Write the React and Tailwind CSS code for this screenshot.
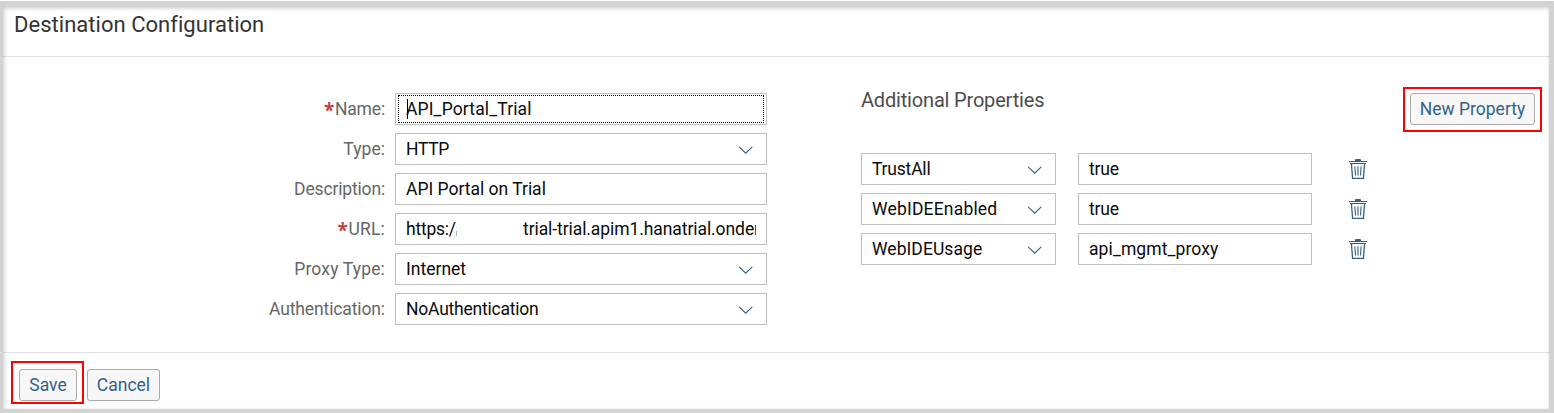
import React from "react";

function Chevron() {
  return (
    <svg width="16" height="9" viewBox="0 0 16 9" className="mt-[2px] shrink-0" fill="none" stroke="#346187" strokeWidth="1.15">
      <path d="M1.1 0.9 L7.7 7.2 L14.3 0.9" />
    </svg>
  );
}

function Trash() {
  return (
    <svg width="18" height="20" viewBox="0 0 18 20" fill="none" stroke="#346187">
      <path d="M6 1 Q6 0 7 0 H11 Q12 0 12 1 V2 H6 Z" fill="#346187" stroke="none" />
      <path d="M0 2.5 H18 M1 4.5 H17" strokeWidth="1" />
      <path d="M2.4 4.5 L3.6 19.4 H14.4 L15.6 4.5" strokeWidth="1.3" />
      <path d="M5.9 7.5 L6.5 16.5 M9 7.5 V16.5 M12.1 7.5 L11.5 16.5" strokeWidth="1.1" />
    </svg>
  );
}

function Box({ width, value, spacing = "tracking-[-0.2px]", select, focused, children }) {
  return (
    <div className={`relative flex h-8 shrink-0 items-center justify-between border border-[#bfbfbf] bg-white pl-[10px] text-[#0a0a0a] ${select ? "pr-[12px]" : "pr-[10px]"} ${width}`}>
      {focused && <div className="absolute inset-x-[2px] inset-y-[1px] border border-dotted border-black" />}
      {focused && <div className="absolute left-[11px] top-[5px] h-[20px] w-px bg-black" />}
      {children || <span className={`whitespace-nowrap ${spacing}`}>{value}</span>}
      {select && <Chevron />}
    </div>
  );
}

function Field({ label, labelSpacing = "tracking-[-0.15px]", required, ...box }) {
  return (
    <div className="flex items-center">
      <div className="flex w-[385px] justify-end text-[#666666]">
        {required && (
          <span className="w-[11px] font-['Open_Sans',sans-serif] text-[19px] leading-[20px] font-bold text-[#c14646]">
            <span className="relative top-[1px]">*</span>
          </span>
        )}
        <span className={labelSpacing}>{label}</span>
      </div>
      <div className="w-[10px]" />
      <Box width="w-[372px]" {...box} />
    </div>
  );
}

function Property({ name, nameSpacing, value, valueSpacing }) {
  return (
    <div className="flex items-center">
      <Box width="w-[195px]" value={name} spacing={nameSpacing} select />
      <div className="w-[22px]" />
      <Box width="w-[234px]" value={value} spacing={valueSpacing} />
      <div className="w-[37px]" />
      <Trash />
    </div>
  );
}

function Button({ children, className }) {
  return (
    <button className={`h-8 rounded-[3px] border border-[#ababab] bg-[#f7f7f7] text-center whitespace-nowrap text-[#346187] ${className}`}>
      {children}
    </button>
  );
}

export default function App() {
  return (
    <div className="h-[413px] w-[1554px] overflow-hidden bg-white pt-px font-['Roboto',sans-serif] text-[17.5px] leading-[20px]">
      <div className="relative flex h-[412px] flex-col border-t-[5px] border-r-[5px] border-b-4 border-l-[3px] border-[#d3d3d3]">
        <div className="pointer-events-none absolute inset-0 shadow-[inset_1px_2px_4px_rgba(0,0,0,0.22)]" />
        <header className="flex h-[51px] items-start border-b border-[#e2e2e2] pt-[6px] pl-[11px]">
          <h1 className="text-[22px] leading-[26px] tracking-[0.03px] text-[#333333]">Destination Configuration</h1>
        </header>
        <main className="-ml-[3px] flex h-[296px] border-b border-[#e2e2e2] pt-[36px]">
          <div className="flex w-[861px] shrink-0 flex-col gap-2">
            <Field required label="Name:" value="API_Portal_Trial" spacing="tracking-[0.13px]" focused />
            <Field label="Type:" labelSpacing="tracking-[0.05px]" value="HTTP" spacing="tracking-[-0.3px]" select />
            <Field label="Description:" labelSpacing="tracking-[-0.16px]" value="API Portal on Trial" spacing="tracking-[-0.01px]" />
            <Field required label="URL:" labelSpacing="tracking-[0.2px]">
              <div className="flex w-[350px] items-center overflow-hidden whitespace-nowrap">
                <span className="shrink-0 tracking-[-0.22px]">https:/</span>
                <span className="mt-[9px] h-[5px] w-px shrink-0 bg-[#b5b5b5]" />
                <span className="flex-1" />
                <span className="w-[233px] shrink-0 overflow-hidden tracking-[-0.08px]">trial-trial.apim1.hanatrial.onder</span>
              </div>
            </Field>
            <Field label="Proxy Type:" labelSpacing="tracking-[0.16px]" value="Internet" spacing="tracking-[0.01px]" select />
            <Field label="Authentication:" labelSpacing="tracking-[-0.12px]" value="NoAuthentication" spacing="tracking-[-0.22px]" select />
          </div>
          <div className="w-[506px] shrink-0">
            <h2 className="-mt-[7px] mb-[39px] text-[20px] leading-[28px] tracking-[-0.18px] text-[#4d4d4d]">Additional Properties</h2>
            <div className="flex flex-col gap-2">
              <Property name="TrustAll" value="true" />
              <Property name="WebIDEEnabled" nameSpacing="tracking-[0.19px]" value="true" />
              <Property name="WebIDEUsage" nameSpacing="tracking-[0.06px]" value="api_mgmt_proxy" valueSpacing="tracking-[0.1px]" />
            </div>
          </div>
          <div className="-mt-[6px] ml-[36px] h-[45px] w-[139px] shrink-0 border-2 border-[#ff0000] pt-[4px] pl-[5px]">
            <Button className="w-[125px]">New Property</Button>
          </div>
        </main>
        <footer className="flex pt-[8px] pl-[8px]">
          <div className="h-[43px] w-[73px] border-2 border-[#ff0000] pt-[6px] pl-[6px]">
            <Button className="w-[58px]">Save</Button>
          </div>
          <div className="pt-[8px] pl-[3px]">
            <Button className="w-[73px]">Cancel</Button>
          </div>
        </footer>
      </div>
    </div>
  );
}
